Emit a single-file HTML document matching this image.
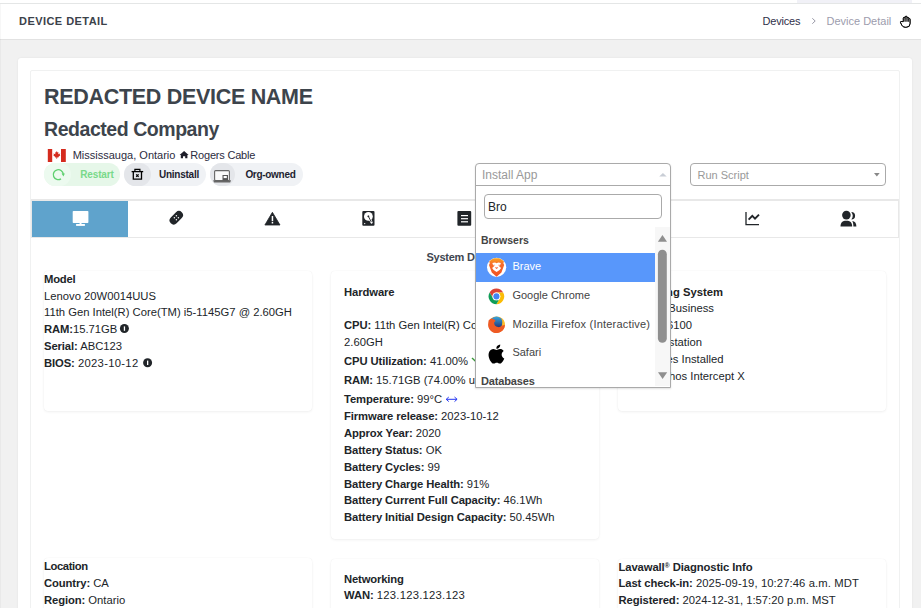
<!DOCTYPE html>
<html><head><meta charset="utf-8"><style>
html,body{margin:0;padding:0;}
body{width:921px;height:608px;overflow:hidden;position:relative;background:#f1f1f1;font-family:"Liberation Sans",sans-serif;}
.a{position:absolute;}
.t{position:absolute;white-space:nowrap;line-height:20px;}
b{font-weight:bold;letter-spacing:-0.1px}
</style></head><body>
<div class="a" style="left:0px;top:0px;width:921px;height:3px;background:#fff"></div>
<div class="a" style="left:797px;top:0px;width:115px;height:3px;background:#f1f1f7"></div>
<div class="a" style="left:0px;top:3px;width:921px;height:1px;background:#e4e6e6"></div>
<div class="a" style="left:0px;top:4px;width:921px;height:35px;background:#fff"></div>
<div class="a" style="left:0px;top:39px;width:921px;height:1px;background:#e2e2e2"></div>
<div class="a" style="left:0px;top:4px;width:1px;height:604px;background:rgba(0,0,0,0.03)"></div>
<div class="t" style="left:19px;top:11px;font-size:11px;font-weight:bold;color:#3b424a;letter-spacing:0.45px">DEVICE DETAIL</div>
<div class="t" style="left:762.6px;top:11px;font-size:11px;color:#2f2f4a;letter-spacing:-0.2px">Devices</div>
<svg class="a" style="left:810px;top:15.5px" width="8" height="10"><path d="M2.3 2.3 L5.2 5 L2.3 7.7" stroke="#9a9aa8" stroke-width="1" fill="none"/></svg><div class="t" style="left:826.5px;top:11px;font-size:11px;color:#9c9cad;">Device Detail</div>
<div class="a" style="left:18px;top:58px;width:894px;height:560px;background:#fff;border-radius:3px;box-shadow:0 0 2px rgba(0,0,0,0.08)"></div>
<div class="a" style="left:30px;top:70px;width:870px;height:560px;border-radius:2px;border:1px solid #f0f1f1;box-sizing:border-box"></div>
<div class="t" style="left:44px;top:87px;font-size:21.5px;font-weight:bold;color:#3d444c;letter-spacing:-0.3px">REDACTED DEVICE NAME</div>
<div class="t" style="left:44px;top:119px;font-size:19.5px;font-weight:bold;color:#3d444c;letter-spacing:-0.45px">Redacted Company</div>
<div class="t" style="left:72.7px;top:145px;font-size:11px;color:#2c2c40;">Mississauga, Ontario</div>
<div class="t" style="left:190.3px;top:145px;font-size:11px;color:#2c2c40;letter-spacing:-0.2px">Rogers Cable</div>
<div class="a" style="left:44px;top:163px;width:76px;height:23px;background:#e6f7e9;border-radius:12px"></div>
<div class="a" style="left:44px;top:163px;width:27px;height:23px;background:#ecfaef;border-radius:12px"></div>
<div class="t" style="left:80.3px;top:165px;font-size:10px;font-weight:bold;color:#79d98a;letter-spacing:-0.15px">Restart</div>
<div class="a" style="left:123.7px;top:163px;width:82px;height:23px;background:#f0f2f5;border-radius:12px"></div>
<div class="a" style="left:123.7px;top:163px;width:27.3px;height:23px;background:#e4e6ea;border-radius:12px"></div>
<div class="t" style="left:159px;top:165px;font-size:10px;font-weight:bold;color:#1e1e30;letter-spacing:-0.25px">Uninstall</div>
<div class="a" style="left:209.7px;top:163px;width:93px;height:23px;background:#f0f2f5;border-radius:12px"></div>
<div class="a" style="left:209.7px;top:163px;width:25px;height:23px;background:#e4e6ea;border-radius:12px"></div>
<div class="t" style="left:245.4px;top:165px;font-size:10px;font-weight:bold;color:#1e1e30;letter-spacing:-0.3px">Org-owned</div>
<div class="a" style="left:690px;top:163px;width:196px;height:23px;border:1px solid #aaa;border-radius:4px;box-sizing:border-box;background:#fff"></div>
<div class="t" style="left:697.5px;top:165px;font-size:11px;color:#999;">Run Script</div>
<div class="a" style="left:31px;top:199px;width:868px;height:39px;border:1px solid #e8e8e8;border-top:2px solid #e8e8e8;box-sizing:border-box"></div>
<div class="a" style="left:32px;top:201px;width:96px;height:36px;background:#5fa3cc"></div>
<div class="t" style="left:426.5px;top:247px;font-size:11px;font-weight:bold;color:#3f4650;letter-spacing:-0.25px">System Details</div>
<div class="a" style="left:44px;top:271px;width:268px;height:140px;background:#fff;border-radius:4px;box-shadow:0 1px 3px rgba(0,0,0,0.06),0 0 1px rgba(0,0,0,0.08)"></div>
<div class="a" style="left:331px;top:271px;width:268px;height:268px;background:#fff;border-radius:4px;box-shadow:0 1px 3px rgba(0,0,0,0.06),0 0 1px rgba(0,0,0,0.08)"></div>
<div class="a" style="left:618px;top:271px;width:268px;height:140px;background:#fff;border-radius:4px;box-shadow:0 1px 3px rgba(0,0,0,0.06),0 0 1px rgba(0,0,0,0.08)"></div>
<div class="a" style="left:44px;top:557.5px;width:268px;height:80px;background:#fff;border-radius:4px;box-shadow:0 1px 3px rgba(0,0,0,0.06),0 0 1px rgba(0,0,0,0.08)"></div>
<div class="a" style="left:331px;top:558.7px;width:268px;height:80px;background:#fff;border-radius:4px;box-shadow:0 1px 3px rgba(0,0,0,0.06),0 0 1px rgba(0,0,0,0.08)"></div>
<div class="a" style="left:618px;top:558.6px;width:268px;height:80px;background:#fff;border-radius:4px;box-shadow:0 1px 3px rgba(0,0,0,0.06),0 0 1px rgba(0,0,0,0.08)"></div>
<div class="t" style="left:44px;top:269px;font-size:11.25px;font-weight:bold;color:#212529;letter-spacing:-0.2px">Model</div>
<div class="t" style="left:44px;top:286px;font-size:11.25px;color:#212529;">Lenovo 20W0014UUS</div>
<div class="t" style="left:44px;top:302px;font-size:11.25px;color:#212529;">11th Gen Intel(R) Core(TM) i5-1145G7 @ 2.60GH</div>
<div class="t" style="left:44px;top:319px;font-size:11.25px;color:#212529;"><b style="color:#212529">RAM:</b>15.71GB</div>
<div class="t" style="left:44px;top:336px;font-size:11.25px;color:#212529;"><b style="color:#212529">Serial:</b> ABC123</div>
<div class="t" style="left:44px;top:353px;font-size:11.25px;color:#212529;"><b style="color:#212529">BIOS:</b> <span style="letter-spacing:0.3px">2023-10-12</span></div>
<div class="t" style="left:344px;top:282px;font-size:11.25px;font-weight:bold;color:#212529;letter-spacing:-0.1px">Hardware</div>
<div class="t" style="left:344px;top:315px;font-size:11.25px;color:#212529;"><b style="color:#212529">CPU:</b> 11th Gen Intel(R) Core(TM) i5-1145G7 @</div>
<div class="t" style="left:344px;top:332px;font-size:11.25px;color:#212529;"><b style="color:#212529"></b>2.60GH</div>
<div class="t" style="left:344px;top:351px;font-size:11.25px;color:#212529;"><b style="color:#212529">CPU Utilization:</b> 41.00%</div>
<div class="t" style="left:344px;top:370px;font-size:11.25px;color:#212529;"><b style="color:#212529">RAM:</b> 15.71GB (74.00% used)</div>
<div class="t" style="left:344px;top:389px;font-size:11.25px;color:#212529;"><b style="color:#212529">Temperature:</b> 99°C&nbsp;</div>
<div class="t" style="left:344px;top:406px;font-size:11.25px;color:#212529;"><b style="color:#212529">Firmware release:</b> 2023-10-12</div>
<div class="t" style="left:344px;top:423px;font-size:11.25px;color:#212529;"><b style="color:#212529">Approx Year:</b> 2020</div>
<div class="t" style="left:344px;top:440px;font-size:11.25px;color:#212529;"><b style="color:#212529">Battery Status:</b> OK</div>
<div class="t" style="left:344px;top:457px;font-size:11.25px;color:#212529;"><b style="color:#212529">Battery Cycles:</b> 99</div>
<div class="t" style="left:344px;top:474px;font-size:11.25px;color:#212529;"><b style="color:#212529">Battery Charge Health:</b> 91%</div>
<div class="t" style="left:344px;top:490px;font-size:11.25px;color:#212529;"><b style="color:#212529">Battery Current Full Capacity:</b> 46.1Wh</div>
<div class="t" style="left:344px;top:507px;font-size:11.25px;color:#212529;"><b style="color:#212529">Battery Initial Design Capacity:</b> 50.45Wh</div>
<div class="t" style="left:0px;top:282px;font-size:11.25px;font-weight:bold;color:#222;left:auto;right:198.0px">Operating System</div>
<div class="t" style="left:0px;top:298px;font-size:11.25px;color:#212529;left:auto;right:207.0px">Windows 11 Business</div>
<div class="t" style="left:0px;top:315px;font-size:11.25px;color:#212529;left:auto;right:228.9px">Build 26100</div>
<div class="t" style="left:0px;top:332px;font-size:11.25px;color:#212529;left:auto;right:219.0px">Workstation</div>
<div class="t" style="left:0px;top:349px;font-size:11.25px;color:#212529;left:auto;right:197.5px">Updates Installed</div>
<div class="t" style="left:0px;top:366px;font-size:11.25px;color:#212529;left:auto;right:176.3px">Sophos Intercept X</div>
<div class="t" style="left:44px;top:556px;font-size:11.25px;font-weight:bold;color:#212529;letter-spacing:-0.4px">Location</div>
<div class="t" style="left:44px;top:573px;font-size:11.25px;color:#212529;"><b style="color:#212529">Country:</b> CA</div>
<div class="t" style="left:44px;top:590px;font-size:11.25px;color:#212529;"><b style="color:#212529">Region:</b> Ontario</div>
<div class="t" style="left:344px;top:569px;font-size:11.25px;font-weight:bold;color:#212529;letter-spacing:-0.15px">Networking</div>
<div class="t" style="left:344px;top:585px;font-size:11.25px;color:#212529;"><b style="color:#212529">WAN:</b> <span style="letter-spacing:0.25px">123.123.123.123</span></div>
<div class="t" style="left:618.5px;top:556px;font-size:11.25px;font-weight:bold;color:#212529;letter-spacing:-0.1px">Lavawall<span style="font-size:7px;vertical-align:3px">®</span> Diagnostic Info</div>
<div class="t" style="left:618.5px;top:573px;font-size:11.25px;color:#212529;"><b style="color:#212529">Last check-in:</b> <span style="letter-spacing:0.1px">2025-09-19, 10:27:46 a.m. MDT</span></div>
<div class="t" style="left:618.5px;top:590px;font-size:11.25px;color:#212529;"><b style="color:#212529">Registered:</b> 2024-12-31, 1:57:20 p.m. MST</div>
<svg class="a" style="left:0;top:0" width="921" height="608" viewBox="0 0 921 608">
<!-- flag -->
<rect x="47.8" y="149" width="4.4" height="13" fill="#d52b1e"/>
<rect x="61" y="149" width="4.8" height="13" fill="#d52b1e"/>
<path transform="translate(47.3 148)" d="M9.5 3 L10.3 4.6 L11.2 4.3 L10.9 6.3 L12.9 5.6 L12.4 6.9 L13.1 7.3 L11 8.9 L11.2 9.6 L9.8 9.4 L9.8 11 L9.2 11 L9.2 9.4 L7.8 9.6 L8 8.9 L5.9 7.3 L6.6 6.9 L6.1 5.6 L8.1 6.3 L7.8 4.3 L8.7 4.6 Z" fill="#d52b1e"/>
<!-- home -->
<path d="M184.1 151 L188.6 155 L187.4 155 L187.4 158.3 L185.2 158.3 L185.2 156.2 L183 156.2 L183 158.3 L180.8 158.3 L180.8 155 L179.6 155 Z" fill="#1e1e2a"/>
<!-- restart -->
<path d="M61 178.9 A5 5 0 1 1 63.3 174.4" stroke="#5fd06f" stroke-width="1.3" fill="none"/>
<path d="M61.6 173.4 L64.9 173.4 L63.4 176.4 Z" fill="#5fd06f"/>
<!-- trash -->
<path d="M131.6 171.6 H143.2" stroke="#000" stroke-width="1.3" fill="none"/>
<path d="M134.9 171.4 V169.4 H139.9 V171.4" stroke="#000" stroke-width="1.2" fill="none"/>
<path d="M133.3 171.6 V179.1 H141.5 V171.6" stroke="#000" stroke-width="1.3" fill="none"/>
<path d="M136.2 174.3 L138.6 176.9 M138.6 174.3 L136.2 176.9" stroke="#000" stroke-width="1.2"/>
<!-- laptop -->
<rect x="214.6" y="170.6" width="14.8" height="10" rx="1" stroke="#666" stroke-width="1.1" fill="#fafafa"/>
<path d="M213.2 180.2 H231 L230.2 182.6 H214 Z" fill="#666"/>
<rect x="222.5" y="175" width="5.5" height="5.4" fill="#555"/>
<rect x="223.6" y="176" width="3.2" height="2.1" fill="#fff"/>
<!-- monitor -->
<rect x="72.7" y="211" width="15.7" height="12" rx="0.8" fill="#fff"/>
<rect x="79.6" y="223" width="1.9" height="1.2" fill="#fff"/>
<rect x="76.1" y="224" width="8.8" height="1.9" fill="#fff"/>
<!-- bandage -->
<g transform="rotate(-45 176.3 217.8)"><rect x="168.55" y="213.7" width="15.5" height="8.2" rx="4.1" fill="#212529"/></g>
<circle cx="176.4" cy="215.8" r="0.75" fill="#fff"/><circle cx="174.4" cy="217.8" r="0.75" fill="#fff"/><circle cx="178.4" cy="217.8" r="0.75" fill="#fff"/><circle cx="176.4" cy="219.8" r="0.75" fill="#fff"/>
<!-- warning -->
<path d="M272.4 212.3 L280 225 L264.9 225 Z" fill="#212529" stroke="#212529" stroke-width="0.8" stroke-linejoin="round"/>
<rect x="271.7" y="216" width="1.5" height="5.2" fill="#fff"/><rect x="271.7" y="222" width="1.5" height="1.5" fill="#fff"/>
<!-- hdd -->
<rect x="362.3" y="210.9" width="12.2" height="14.8" rx="1" fill="#212529"/>
<circle cx="368.4" cy="216.4" r="4.4" fill="#fff"/>
<circle cx="368.4" cy="216.4" r="0.8" fill="#212529"/>
<path d="M368.5 216.6 L371.6 222.6" stroke="#fff" stroke-width="2.2" stroke-linecap="round"/><path d="M368.5 216.6 L371.3 222" stroke="#212529" stroke-width="0.9"/><circle cx="368.4" cy="216.3" r="0.9" fill="#212529"/>
<circle cx="364.7" cy="223.6" r="0.7" fill="#fff"/>
<!-- file list -->
<rect x="457.4" y="211.1" width="13.8" height="14.6" rx="1" fill="#212529"/>
<rect x="461" y="215" width="7" height="1.2" fill="#fff"/><rect x="461" y="218.1" width="7" height="1.2" fill="#fff"/><rect x="461" y="221.2" width="7" height="1.2" fill="#fff"/>
<!-- chart -->
<path d="M746 212 V224.6 H759" stroke="#212529" stroke-width="1.3" fill="none"/>
<path d="M748.6 219.6 L752.3 215.9 L755 218.6 L759 214.6" stroke="#212529" stroke-width="1.9" fill="none"/>
<!-- users -->
<circle cx="846.4" cy="215.1" r="4.3" fill="#212529"/>
<path d="M840.5 226.6 C840.5 222.5 842.5 220.8 846.4 220.8 C850.2 220.8 852.2 222.5 852.2 226.6 Z" fill="#212529"/>
<path d="M851.3 211.9 A3.8 3.8 0 1 1 851.3 219.5 A6.2 6.2 0 0 0 851.3 211.9 Z" fill="#212529"/>
<path d="M852.2 220.9 C854.9 221.2 856.4 223 856.4 226.6 L853.4 226.6 C853.4 224.2 853.1 222.2 852.2 220.9 Z" fill="#212529"/>
<!-- info icons -->
<circle cx="124.4" cy="328.5" r="4.5" fill="#212529"/><rect x="123.8" y="326.4" width="1.3" height="4.4" fill="#fff"/>
<circle cx="147.6" cy="362.7" r="4.5" fill="#212529"/><rect x="147" y="360.6" width="1.3" height="4.4" fill="#fff"/>
<!-- run script arrow -->
<path d="M874 173 L879.7 173 L876.85 176.4 Z" fill="#888"/>
<!-- temp arrow -->
<path d="M472 358 L475.5 361.2" stroke="#3a9a3a" stroke-width="1.4" fill="none"/>
<path d="M446.5 399.3 H456.8 M448.8 397 L446.2 399.3 L448.8 401.6 M454.5 397 L457.1 399.3 L454.5 401.6" stroke="#1a2cf0" stroke-width="0.95" fill="none"/>
<!-- hand cursor -->
<path d="M903.3 21.6 V18.3 Q903.3 17.3 904.2 17.3 Q905.1 17.3 905.1 18.3 V17.3 Q905.1 16.2 906.1 16.2 Q907 16.2 907 17.3 V18.1 Q907 17.3 907.9 17.3 Q908.7 17.3 908.7 18.3 V19.2 Q908.7 18.5 909.4 18.5 Q910.1 18.5 910.1 19.3 V23.5 Q910.1 27.3 906.2 27.3 H905.2 Q903 27.3 901.8 25.2 L900.5 22.6 Q900.2 21.6 901 21.5 L903.3 21.6 Z" fill="#fff" stroke="#000" stroke-width="0.85"/>
<rect x="903.8" y="17.7" width="5.8" height="3.8" fill="#a8a8a8"/>
<path d="M903.3 21.6 V18.3 Q903.3 17.3 904.2 17.3 Q905.1 17.3 905.1 18.3 V17.3 Q905.1 16.2 906.1 16.2 Q907 16.2 907 17.3 V18.1 Q907 17.3 907.9 17.3 Q908.7 17.3 908.7 18.3 V19.2 Q908.7 18.5 909.4 18.5 Q910.1 18.5 910.1 19.3 V23.5 Q910.1 27.3 906.2 27.3 H905.2 Q903 27.3 901.8 25.2 L900.5 22.6 Q900.2 21.6 901 21.5 L903.3 21.6 Z" fill="none" stroke="#000" stroke-width="0.85"/>
<path d="M905.1 18.2 V21.8 M907 18 V21.8 M908.7 19 V21.8" stroke="#000" stroke-width="0.85"/>
</svg>
<div class="a" style="left:475px;top:163px;width:196px;height:225px;border:1px solid #aaa;border-radius:4px 4px 0 0;box-sizing:border-box;background:#fff;box-shadow:0 1px 2px rgba(0,0,0,0.12)"></div>
<div class="a" style="left:475px;top:185px;width:196px;height:1px;background:#aaa"></div>
<div class="t" style="left:482px;top:165px;font-size:12px;color:#999;">Install App</div>
<div class="a" style="left:484px;top:194px;width:178px;height:25px;border:1px solid #aaa;border-radius:4px;box-sizing:border-box"></div>
<div class="t" style="left:488px;top:197px;font-size:12px;color:#212529;">Bro</div>
<div class="t" style="left:481px;top:230px;font-size:10.5px;font-weight:bold;color:#444;">Browsers</div>
<div class="a" style="left:476px;top:253px;width:179px;height:29px;background:#5897fb"></div>
<div class="t" style="left:512.4px;top:256px;font-size:11px;color:#fff;">Brave</div>
<div class="t" style="left:512.4px;top:285px;font-size:11px;color:#444;">Google Chrome</div>
<div class="t" style="left:512.4px;top:314px;font-size:11px;color:#444;letter-spacing:0.2px">Mozilla Firefox (Interactive)</div>
<div class="t" style="left:512.4px;top:342px;font-size:11px;color:#444;">Safari</div>
<div class="t" style="left:481px;top:371px;font-size:11px;font-weight:bold;color:#444;letter-spacing:-0.15px">Databases</div>
<svg class="a" style="left:0;top:0" width="921" height="608" viewBox="0 0 921 608">
<path d="M659.2 176.6 L666.7 176.6 L662.95 173 Z" fill="#c9ced6"/>
<rect x="655" y="227" width="15" height="159" fill="#f7f7f7"/>
<path d="M657.9 241.7 L667 241.7 L662.45 235.1 Z" fill="#8f8f8f"/>
<rect x="657.9" y="249.7" width="8.9" height="93.1" rx="4.45" fill="#8f8f8f"/>
<path d="M658 372.2 L667.2 372.2 L662.6 378.9 Z" fill="#8f8f8f"/>
<!-- brave -->
<circle cx="496.6" cy="267.3" r="9.6" fill="#fff"/>
<defs><linearGradient id="bg1" x1="0" y1="0" x2="0" y2="1"><stop offset="0" stop-color="#f9a51f"/><stop offset="0.3" stop-color="#f86d2b"/><stop offset="1" stop-color="#f2501f"/></linearGradient>
<linearGradient id="ffg" x1="1" y1="0" x2="0" y2="1"><stop offset="0" stop-color="#ffd22e"/><stop offset="0.45" stop-color="#f7841f"/><stop offset="1" stop-color="#d9361f"/></linearGradient>
<linearGradient id="ffb" x1="0" y1="0" x2="0" y2="1"><stop offset="0" stop-color="#3aa7dd"/><stop offset="1" stop-color="#1c2a6e"/></linearGradient></defs>
<path transform="translate(496.6 257.3) scale(1.15 1) translate(-10 0)" d="M5.6 2.2 L8 1 H12 L14.4 2.2 L16.4 4.2 L15.9 6 L16.6 7.8 L14.2 15.2 L10 19.4 L5.8 15.2 L3.4 7.8 L4.1 6 L3.6 4.2 Z" fill="url(#bg1)"/>
<path transform="translate(496.6 257.3) scale(1.15 1) translate(-10 0)" d="M6.3 5.6 L8.6 5.2 L10 5.9 L11.4 5.2 L13.7 5.6 L13.2 7.4 L12 8.6 L13.9 10.8 L12.6 12.6 L10 14.6 L7.4 12.6 L6.1 10.8 L8 8.6 L6.8 7.4 Z" fill="#fff"/>
<path transform="translate(496.6 257.3) scale(1.15 1) translate(-10 0)" d="M8.6 9.6 L10 10.3 L11.4 9.6 L10.8 11 L10 11.6 L9.2 11 Z M7.2 7.2 L8.8 7.6 L8.2 8.2 Z M12.8 7.2 L11.2 7.6 L11.8 8.2 Z" fill="#f4623a"/>
<!-- chrome -->
<path d="M496.4 292.5 L503.155 292.5 A7.8 7.8 0 0 0 489.645 292.5 L493.023 298.35 A3.9 3.9 0 0 1 496.4 292.5 Z" fill="#db4437"/>
<path d="M499.777 298.35 L496.4 304.2 A7.8 7.8 0 0 0 503.155 292.5 L496.4 292.5 A3.9 3.9 0 0 1 499.777 298.35 Z" fill="#fbbc05"/>
<path d="M493.023 298.35 L489.645 292.5 A7.8 7.8 0 0 0 496.4 304.2 L499.777 298.35 A3.9 3.9 0 0 1 493.023 298.35 Z" fill="#0f9d58"/>
<circle cx="496.4" cy="296.4" r="3.9" fill="#fff"/>
<circle cx="496.4" cy="296.4" r="3.05" fill="#4285f4"/>
<!-- firefox -->
<circle cx="496.6" cy="324.7" r="8.3" fill="url(#ffg)"/>
<circle cx="496.5" cy="322.6" r="6.1" fill="url(#ffb)"/>
<path d="M488.6 320.6 C490 318.6 492.3 318.3 494.4 319.6 L495.6 321 L494.2 322.2 C493.8 324.6 495.4 326.8 498 327.1 C499.8 327.3 501.2 326.6 502.2 325.6 L504.9 324.8 C504.9 329.4 501.2 333 496.6 333 C492 333 488.3 329.3 488.3 324.7 C488.3 323.2 488.4 321.9 488.6 320.6 Z" fill="#ee5a24"/>
<path d="M502.3 318.6 C503.8 320.2 504.9 322.4 504.9 324.8 L502.2 325.6 C502.5 323.2 502.5 320.8 502.3 318.6 Z" fill="#fcc02c"/>
<!-- apple -->
<path transform="translate(486.8 344.4) scale(0.8)" d="M12.152 6.896c-.948 0-2.415-1.078-3.96-1.04-2.04.027-3.91 1.183-4.961 3.014-2.117 3.675-.546 9.103 1.519 12.09 1.013 1.454 2.208 3.09 3.792 3.039 1.52-.065 2.09-.987 3.935-.987 1.831 0 2.35.987 3.96.948 1.637-.026 2.676-1.48 3.676-2.948 1.156-1.688 1.636-3.325 1.662-3.415-.039-.013-3.182-1.221-3.22-4.857-.026-3.04 2.48-4.494 2.597-4.559-1.429-2.09-3.623-2.324-4.39-2.376-2-.156-3.675 1.09-4.61 1.09zM15.53 3.83c.843-1.012 1.4-2.427 1.245-3.83-1.207.052-2.662.805-3.532 1.818-.78.896-1.454 2.338-1.273 3.714 1.338.104 2.715-.688 3.559-1.701" fill="#000"/>
</svg>
</body></html>
